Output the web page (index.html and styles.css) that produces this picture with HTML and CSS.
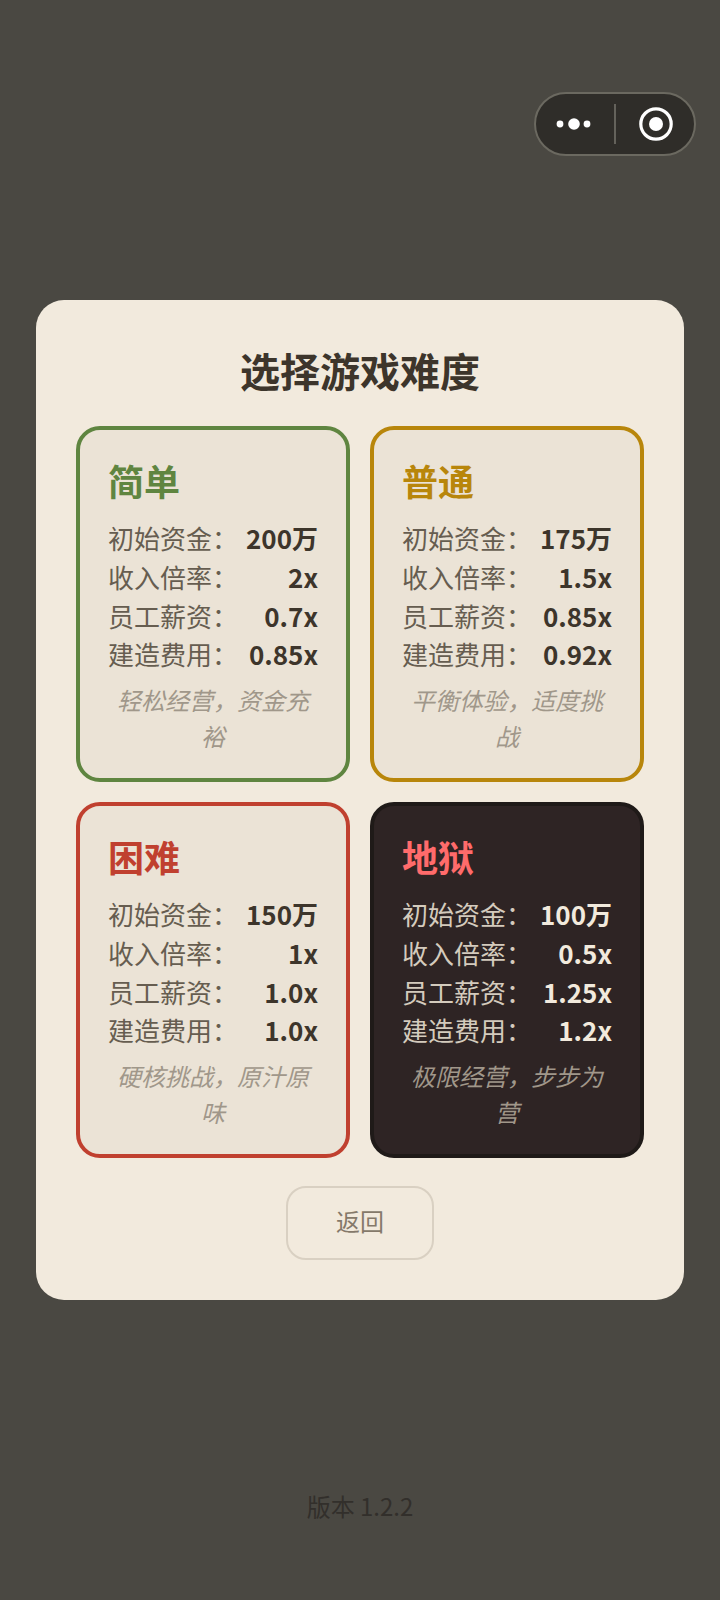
FILE: index.html
```html
<!DOCTYPE html>
<html lang="zh">
<head>
<meta charset="utf-8">
<title>选择游戏难度</title>
<link rel="stylesheet" href="styles.css">
</head>
<body>
<div class="page">
  <div class="capsule">
    <svg class="cap-more" width="44" height="16" viewBox="0 0 44 16"><circle cx="5" cy="8" r="3.4"/><circle cx="19" cy="8" r="5.8"/><circle cx="32" cy="8" r="3.4"/></svg>
    <span class="cap-line"></span>
    <svg class="cap-close" width="36" height="36" viewBox="0 0 36 36"><circle class="ring" cx="18" cy="18" r="15.2"/><circle class="dot" cx="18" cy="18" r="7"/></svg>
  </div>
  <main class="panel">
    <h1 class="title">选择游戏难度</h1>
    <div class="grid">
      <section class="card easy">
        <h2 class="name">简单</h2>
        <div class="row"><span>初始资金：</span><b>200万</b></div>
        <div class="row"><span>收入倍率：</span><b>2x</b></div>
        <div class="row"><span>员工薪资：</span><b>0.7x</b></div>
        <div class="row"><span>建造费用：</span><b>0.85x</b></div>
        <p class="note">轻松经营，资金充裕</p>
      </section>
      <section class="card normal">
        <h2 class="name">普通</h2>
        <div class="row"><span>初始资金：</span><b>175万</b></div>
        <div class="row"><span>收入倍率：</span><b>1.5x</b></div>
        <div class="row"><span>员工薪资：</span><b>0.85x</b></div>
        <div class="row"><span>建造费用：</span><b>0.92x</b></div>
        <p class="note">平衡体验，适度挑战</p>
      </section>
      <section class="card hard">
        <h2 class="name">困难</h2>
        <div class="row"><span>初始资金：</span><b>150万</b></div>
        <div class="row"><span>收入倍率：</span><b>1x</b></div>
        <div class="row"><span>员工薪资：</span><b>1.0x</b></div>
        <div class="row"><span>建造费用：</span><b>1.0x</b></div>
        <p class="note">硬核挑战，原汁原味</p>
      </section>
      <section class="card hell">
        <h2 class="name">地狱</h2>
        <div class="row"><span>初始资金：</span><b>100万</b></div>
        <div class="row"><span>收入倍率：</span><b>0.5x</b></div>
        <div class="row"><span>员工薪资：</span><b>1.25x</b></div>
        <div class="row"><span>建造费用：</span><b>1.2x</b></div>
        <p class="note">极限经营，步步为营</p>
      </section>
    </div>
    <button class="back" type="button">返回</button>
  </main>
  <footer class="version">版本 1.2.2</footer>
</div>
</body>
</html>
```
FILE: styles.css
```css
* { box-sizing: border-box; }
html, body { margin: 0; padding: 0; }
body {
  width: 720px;
  height: 1600px;
  overflow: hidden;
  background: #4a4842;
  font-family: "Noto Sans CJK SC", "Noto Sans", sans-serif;
}
.page {
  height: 1600px;
  padding-top: 92px;
  display: flex;
  flex-direction: column;
  align-items: center;
}
.capsule {
  align-self: flex-end;
  margin-right: 24px;
  width: 162px;
  height: 64px;
  border: 2px solid #6b6960;
  border-radius: 32px;
  background: #2f2d29;
  display: flex;
  align-items: center;
}
.cap-more { margin-left: 19px; fill: #fff; flex: none; }
.cap-line { width: 2px; height: 40px; background: #64625b; margin-left: 15px; flex: none; }
.cap-close { margin-left: 22px; flex: none; }
.ring { fill: none; stroke: #fff; stroke-width: 3.2; }
.dot { fill: #fff; }
.panel {
  margin-top: 144px;
  width: 648px;
  height: 1000px;
  padding: 43px 40px 40px;
  background: #f2eadd;
  border-radius: 28px;
  display: flex;
  flex-direction: column;
  align-items: center;
}
.title {
  margin: 0 0 29px;
  font-size: 40px;
  line-height: 54px;
  font-weight: 700;
  color: #3d352b;
}
.grid {
  width: 100%;
  display: grid;
  grid-template-columns: 274px 274px;
  grid-auto-rows: 356px;
  gap: 20px;
}
.card {
  border: 4px solid;
  border-radius: 24px;
  padding: 26px 28px 28px;
  background: #ebe3d6;
  color: #665d50;
}
.card b { font-weight: 700; color: #3d352b; }
.easy { border-color: #5f8540; }
.easy .name { color: #5f8540; }
.normal { border-color: #b8860b; }
.normal .name { color: #b8860b; }
.hard { border-color: #c0402f; }
.hard .name { color: #c0402f; }
.hell {
  border-color: #1f1a18;
  background: #2e2424;
  color: #d4cbbd;
}
.hell .name { color: #ff6b6b; }
.hell b { color: #f2eadd; }
.hell .note { color: #a0978a; }
.name {
  margin: 0 0 15px;
  font-size: 36px;
  line-height: 48px;
  font-weight: 700;
}
.row {
  display: flex;
  justify-content: space-between;
  font-size: 26px;
  line-height: 38.8px;
  white-space: nowrap;
}
.note {
  margin: 7.8px 0 0;
  font-size: 24px;
  line-height: 36px;
  font-style: italic;
  text-align: center;
  color: #a0978a;
}
.back {
  margin-top: 28px;
  width: 148px;
  height: 74px;
  border: 2px solid #d9d0c2;
  border-radius: 20px;
  background: transparent;
  font: inherit;
  font-size: 24px;
  line-height: 66px;
  color: #85796a;
  padding: 0 0 8px;
}
.version {
  margin-top: 188px;
  font-size: 24px;
  line-height: 36px;
  color: #322f2b;
}
```
